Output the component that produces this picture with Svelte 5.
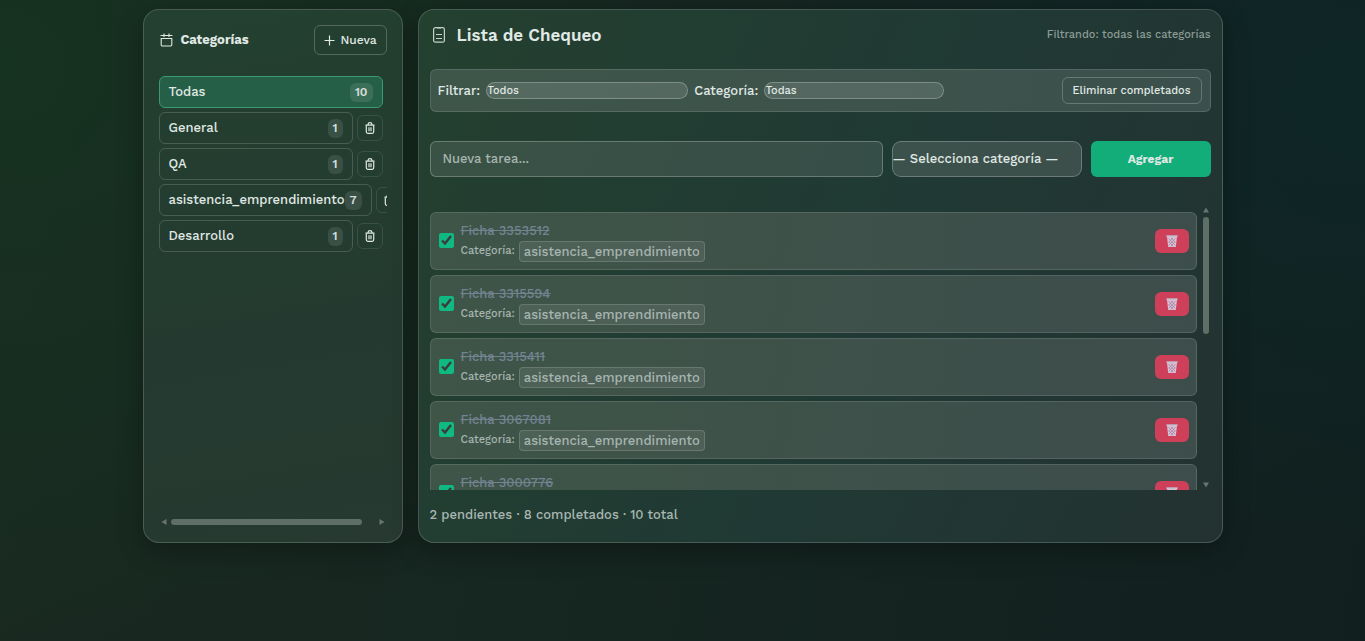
<script>
  const categories = [
    { name: 'General', count: 1 },
    { name: 'QA', count: 1 },
    { name: 'asistencia_emprendimiento', count: 7 },
    { name: 'Desarrollo', count: 1 }
  ];

  let tasks = $state([
    { id: 3353512, done: true },
    { id: 3315594, done: true },
    { id: 3315411, done: true },
    { id: 3067081, done: true },
    { id: 3000776, done: true }
  ]);

  let active = $state('Todas');
  let draft = $state('');
</script>

<main class="page">
  <aside class="panel sidebar">
    <header class="side-head">
      <h2>
        <svg width="13" height="14" viewBox="0 0 13 14" fill="none" stroke="currentColor" stroke-width="1.1" aria-hidden="true">
          <path d="M.5 2.5h12M4 .5v3.5M9 .5v3.5" />
          <path d="M1.2 5.5h10.6v6.3a1.2 1.2 0 0 1-1.2 1.2H2.4a1.2 1.2 0 0 1-1.2-1.2z" />
        </svg>
        Categorías
      </h2>
      <button class="outline new">
        <svg width="11" height="11" viewBox="0 0 11 11" stroke="currentColor" stroke-width="1.2" aria-hidden="true"><path d="M5.5 .5v10M.5 5.5h10" /></svg>
        Nueva
      </button>
    </header>

    <ul class="cats">
      <li>
        <button class="cat" class:active={active === 'Todas'} onclick={() => (active = 'Todas')}>
          <span>Todas</span><span class="badge">10</span>
        </button>
      </li>
      {#each categories as c}
        <li>
          <button class="cat" class:active={active === c.name} onclick={() => (active = c.name)}>
            <span>{c.name}</span><span class="badge">{c.count}</span>
          </button>
          <button class="trash" aria-label="Eliminar {c.name}">
            <svg width="10" height="12" viewBox="0 0 10 12" fill="none" stroke="currentColor" stroke-width="1.2" aria-hidden="true">
              <path d="M3 2.6C3.1 1.2 3.9.7 5 .7s1.9.5 2 1.9M.5 3.2h9" />
              <path d="M1.3 3.4v6.4q0 1.5 1.5 1.5h4.4q1.5 0 1.5-1.5V3.4M4 5.3v4M6 5.3v4" />
            </svg>
          </button>
        </li>
      {/each}
    </ul>

    <div class="hbar" aria-hidden="true">
      <svg width="6" height="6" viewBox="0 0 6 6"><path d="M5.5 0v6L.5 3z" /></svg>
      <div class="htrack"><div class="thumb"></div></div>
      <svg width="6" height="6" viewBox="0 0 6 6"><path d="M.5 0v6l5-3z" /></svg>
    </div>
  </aside>

  <section class="panel content">
    <header class="head">
      <h1>
        <svg width="12" height="16" viewBox="0 0 12 16" fill="none" stroke="currentColor" aria-hidden="true">
          <rect x=".6" y=".6" width="10.8" height="14.6" rx="1.8" stroke-width="1.2" />
          <path d="M3 7.5h6M3 11.5h6M4 .8h4" stroke-width="1.2" />
        </svg>
        Lista de Chequeo
      </h1>
      <p>Filtrando: todas las categorías</p>
    </header>

    <div class="filters">
      <label for="status">Filtrar:</label>
      <select id="status" class="pill wide"><option>Todos</option><option>Pendientes</option><option>Completados</option></select>
      <label for="category">Categoría:</label>
      <select id="category" class="pill">
        <option>Todas</option>
        {#each categories as c}<option>{c.name}</option>{/each}
      </select>
      <button class="outline clear">Eliminar completados</button>
    </div>

    <form class="add" onsubmit={(e) => e.preventDefault()}>
      <input type="text" placeholder="Nueva tarea..." aria-label="Nueva tarea" bind:value={draft} />
      <select aria-label="Categoría de la tarea">
        <option>— Selecciona categoría —</option>
        {#each categories as c}<option>{c.name}</option>{/each}
      </select>
      <button type="submit">Agregar</button>
    </form>

    <div class="scroll">
      <ul class="tasks">
        {#each tasks as t}
          <li class="task">
            <input type="checkbox" id="t{t.id}" bind:checked={t.done} />
            <div class="info">
              <label for="t{t.id}" class:done={t.done}>Ficha {t.id}</label>
              <div class="meta">Categoría: <span class="tag">asistencia_emprendimiento</span></div>
            </div>
            <button class="delete" aria-label="Eliminar ficha {t.id}">
              <svg width="12" height="12" viewBox="0 0 12 12" aria-hidden="true">
                <path d="M1 1.2h10L9.8 12H2.2z" fill="#dcc3d6" />
                <path d="M2.4 3l7 7.5M5 2.6l4.5 4.8M2.8 6.5l4.6 5M9.6 3l-7 7.5M7 2.6L2.5 7.4M9.2 6.5l-4.6 5" stroke="#a57f9f" stroke-width=".8" />
                <path d="M.4 1.1h11.2" stroke="#c3c5d4" stroke-width="1.5" />
              </svg>
            </button>
          </li>
        {/each}
      </ul>
      <div class="vbar" aria-hidden="true">
        <svg width="6" height="6" viewBox="0 0 6 6"><path d="M0 5.5h6L3 .5z" /></svg>
        <div class="vtrack"><div class="thumb"></div></div>
        <svg width="6" height="6" viewBox="0 0 6 6"><path d="M0 .5h6l-3 5z" /></svg>
      </div>
    </div>

    <footer>2 pendientes · 8 completados · 10 total</footer>
  </section>
</main>

<style>
  :global(body) {
    min-height: 100vh;
    font-family: 'Work Sans', Inter, sans-serif;
    font-size: 13px;
    font-weight: 500;
    line-height: 20px;
    color: #e0e9e5;
    background:
      radial-gradient(ellipse 50% 90% at 0% 10%, rgba(21, 52, 32, 0.8), transparent),
      radial-gradient(ellipse 45% 70% at 100% 15%, rgba(13, 40, 41, 0.75), transparent),
      linear-gradient(100deg, #1a2a21, #11201f);
  }
  * { box-sizing: border-box; }
  h1, h2, p, ul { margin: 0; padding: 0; }
  ul { list-style: none; }
  button, input, select {
    font: inherit;
    color: inherit;
    margin: 0;
  }
  button { cursor: pointer; }

  .page {
    max-width: 1080px;
    margin: 0 auto;
    padding: 9px 0;
    display: grid;
    grid-template-columns: 260px minmax(0, 1fr);
    gap: 15px;
  }
  .panel {
    border: 1px solid rgba(255, 255, 255, 0.17);
    border-radius: 16px;
    box-shadow: 0 8px 26px rgba(0, 0, 0, 0.3);
    display: flex;
    flex-direction: column;
    min-width: 0;
  }
  .sidebar {
    padding: 15px 15px 17px;
    background: linear-gradient(170deg, #234030, #243a30 60%, #273930);
  }
  .content {
    padding: 11px 11px 17px;
    background: linear-gradient(115deg, #24402f, #203a34 50%, #233231);
  }

  .side-head {
    display: flex;
    align-items: center;
    justify-content: space-between;
    height: 30px;
    margin-bottom: 21px;
  }
  h2 {
    display: flex;
    align-items: center;
    gap: 8px;
    padding-left: 1px;
    font-size: 13px;
    font-weight: 700;
  }
  .outline {
    background: transparent;
    border: 1px solid rgba(255, 255, 255, 0.22);
    border-radius: 6px;
  }
  .new {
    display: flex;
    align-items: center;
    gap: 5px;
    height: 30px;
    padding: 0 9px;
    font-size: 12px;
  }

  .cats {
    flex: 1;
    display: flex;
    flex-direction: column;
    gap: 4px;
    padding-right: 4px;
    overflow: auto;
    scrollbar-width: none;
  }
  .cats li {
    display: flex;
    align-items: center;
    gap: 4px;
  }
  .cat {
    flex: 1 0 auto;
    display: flex;
    align-items: center;
    justify-content: space-between;
    height: 32px;
    padding: 0 9px;
    border: 1px solid rgba(255, 255, 255, 0.17);
    border-radius: 6px;
    background: transparent;
    white-space: nowrap;
  }
  .cat.active {
    background: #265f47;
    border-color: #389b72;
  }
  .badge {
    padding: 0 5px;
    border-radius: 6px;
    background: rgba(255, 255, 255, 0.1);
    font-size: 12px;
    font-weight: 600;
    line-height: 19px;
    color: #d3ddd9;
  }
  .trash {
    flex: none;
    display: grid;
    place-items: center;
    width: 26px;
    height: 26px;
    padding: 0;
    border: 1px solid rgba(255, 255, 255, 0.1);
    border-radius: 6px;
    background: transparent;
  }

  .thumb {
    border-radius: 3px;
    background: #5f6f68;
  }
  .hbar, .vbar {
    display: flex;
    fill: #66766e;
  }
  .hbar {
    align-items: center;
    gap: 4px;
    padding: 0 2px;
  }
  .htrack { flex: 1; }
  .htrack .thumb {
    width: 94%;
    height: 6px;
  }
  .vbar {
    flex-direction: column;
    align-items: center;
    gap: 4px;
    padding: 2px 2px 2px 6px;
  }
  .vtrack { flex: 1; }
  .vtrack .thumb {
    width: 6px;
    height: 45%;
  }

  .head {
    display: flex;
    align-items: center;
    justify-content: space-between;
    height: 28px;
    margin-bottom: 20px;
  }
  h1 {
    display: flex;
    align-items: center;
    gap: 12px;
    padding-left: 3px;
    font-size: 17px;
    font-weight: 600;
  }
  h1 svg { color: #c3d0ca; }
  .head p {
    font-size: 11px;
    color: #8b9b96;
  }

  .filters {
    display: flex;
    align-items: center;
    gap: 6px;
    padding: 7px 8px 7px 7px;
    border: 1px solid rgba(255, 255, 255, 0.13);
    border-radius: 6px;
    background: linear-gradient(100deg, #3e564a, #3b504c);
  }
  select {
    appearance: none;
    padding: 0;
    border: 1px solid rgba(255, 255, 255, 0.25);
    background: rgba(255, 255, 255, 0.12);
  }
  .pill {
    width: 180px;
    height: 17px;
    border-radius: 9px;
    font-size: 11px;
    line-height: 15px;
  }
  .pill.wide { width: 202px; }
  .clear {
    height: 27px;
    margin-left: auto;
    padding: 0 10px;
    font-size: 11px;
  }

  .add {
    display: flex;
    gap: 9px;
    height: 36px;
    margin: 29px 0 28px;
  }
  .add input {
    flex: 1;
    min-width: 0;
    padding: 0 12px;
    border: 1px solid rgba(255, 255, 255, 0.25);
    border-radius: 6px;
    background: rgba(255, 255, 255, 0.1);
  }
  .add input::placeholder { color: #a7b5ae; }
  .add select {
    width: 190px;
    border-radius: 9px;
  }
  .add button {
    width: 120px;
    border: 0;
    border-radius: 6px;
    background: #12ad79;
    font-size: 12px;
    font-weight: 700;
  }

  .scroll {
    display: flex;
    height: 285px;
  }
  .tasks {
    flex: 1;
    display: flex;
    flex-direction: column;
    gap: 5px;
    padding-top: 7px;
    overflow-y: auto;
    scrollbar-width: none;
  }
  .task {
    flex: none;
    display: flex;
    align-items: center;
    gap: 7px;
    height: 58px;
    padding: 0 7px 1px 8px;
    border: 1px solid rgba(255, 255, 255, 0.12);
    border-radius: 6px;
    background: linear-gradient(100deg, #3f5548, #3d4d4b);
  }
  .task input {
    width: 15px;
    height: 15px;
    accent-color: #10b981;
  }
  .info { flex: 1; }
  .info label {
    display: block;
    line-height: 21px;
  }
  .info .done {
    color: #728390;
    text-decoration: line-through;
  }
  .meta {
    display: flex;
    align-items: center;
    gap: 4px;
    font-size: 11px;
    color: #a6b5b0;
  }
  .tag {
    padding: 0 4px;
    border: 1px solid rgba(255, 255, 255, 0.15);
    border-radius: 4px;
    background: rgba(255, 255, 255, 0.08);
    font-size: 13px;
    line-height: 19px;
  }
  .delete {
    display: grid;
    place-items: center;
    width: 34px;
    height: 24px;
    padding: 0;
    border: 0;
    border-radius: 6px;
    background: #ce4059;
  }
  footer {
    margin-top: 15px;
    color: #a9b7b2;
  }
</style>
